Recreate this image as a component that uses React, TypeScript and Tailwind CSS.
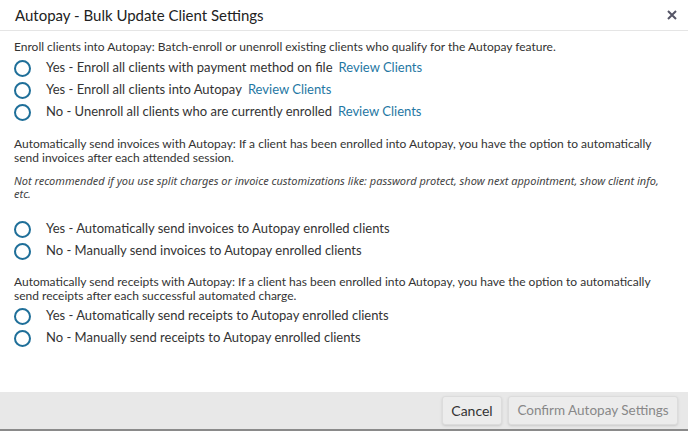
import { useState } from 'react'

type Option = { id: string; label: string; review?: boolean }

const ENROLL_OPTIONS: Option[] = [
  { id: 'enroll-pm', label: 'Yes - Enroll all clients with payment method on file', review: true },
  { id: 'enroll-all', label: 'Yes - Enroll all clients into Autopay', review: true },
  { id: 'unenroll', label: 'No - Unenroll all clients who are currently enrolled', review: true }
]

const INVOICE_OPTIONS: Option[] = [
  { id: 'inv-yes', label: 'Yes - Automatically send invoices to Autopay enrolled clients' },
  { id: 'inv-no', label: 'No - Manually send invoices to Autopay enrolled clients' }
]

const RECEIPT_OPTIONS: Option[] = [
  { id: 'rec-yes', label: 'Yes - Automatically send receipts to Autopay enrolled clients' },
  { id: 'rec-no', label: 'No - Manually send receipts to Autopay enrolled clients' }
]

function RadioGroup({ options, value, onChange }: { options: Option[]; value: string; onChange: (v: string) => void }) {
  return (
    <div className="flex flex-col">
      {options.map((opt) => (
        <label key={opt.id} className="flex items-center h-[22px] cursor-pointer">
          <span className="w-[17px] h-[17px] rounded-full border-2 border-[#1f6f99] ml-[14px] mr-[15px] flex items-center justify-center shrink-0">
            {value === opt.id && <span className="w-[7px] h-[7px] rounded-full bg-[#1f6f99]" />}
          </span>
          <input type="radio" className="hidden" checked={value === opt.id} onChange={() => onChange(opt.id)} />
          <span className="text-[13px] text-[#333]">{opt.label}</span>
          {opt.review && <a className="text-[13px] text-[#1f77a3] ml-[6px]">Review Clients</a>}
        </label>
      ))}
    </div>
  )
}

export default function App() {
  const [enroll, setEnroll] = useState('')
  const [invoice, setInvoice] = useState('')
  const [receipt, setReceipt] = useState('')

  return (
    <div className="w-[688px] h-[431px] bg-white flex flex-col font-['Lato',sans-serif] text-[#333] overflow-hidden">
      <div className="h-[31px] border-b border-[#e5e5e5] flex items-center justify-between pl-[15px] pr-[6px] shrink-0">
        <h1 className="text-[15px] text-[#222]">Autopay - Bulk Update Client Settings</h1>
        <button className="text-[#555] w-[20px] h-[20px] flex items-center justify-center">
          <svg width="10" height="10" viewBox="0 0 10 10">
            <path d="M1 1L9 9M9 1L1 9" stroke="#556" strokeWidth="2" />
          </svg>
        </button>
      </div>

      <div className="flex-1 pt-[8px]">
        <p className="text-[12px] px-[14px] leading-[16px]">
          Enroll clients into Autopay: Batch-enroll or unenroll existing clients who qualify for the Autopay feature.
        </p>
        <div className="mt-[2px]">
          <RadioGroup options={ENROLL_OPTIONS} value={enroll} onChange={setEnroll} />
        </div>

        <p className="text-[12px] px-[14px] leading-[14px] mt-[14px]">
          Automatically send invoices with Autopay: If a client has been enrolled into Autopay, you have the option to automatically send invoices after each attended session.
        </p>
        <p className="text-[11px] italic px-[14px] leading-[13px] mt-[9px] text-[#444] font-['Noto_Sans',sans-serif]">
          Not recommended if you use split charges or invoice customizations like: password protect, show next appointment, show client info, etc.
        </p>
        <div className="mt-[18px]">
          <RadioGroup options={INVOICE_OPTIONS} value={invoice} onChange={setInvoice} />
        </div>

        <p className="text-[12px] px-[14px] leading-[14px] mt-[13px]">
          Automatically send receipts with Autopay: If a client has been enrolled into Autopay, you have the option to automatically send receipts after each successful automated charge.
        </p>
        <div className="mt-[2px]">
          <RadioGroup options={RECEIPT_OPTIONS} value={receipt} onChange={setReceipt} />
        </div>
      </div>

      <div className="h-[39px] bg-[#e8e8e8] border-b-2 border-[#8a8a8a] flex items-center justify-end gap-[6px] pr-[10px] shrink-0">
        <button className="h-[29px] w-[60px] bg-[#ececec] border border-[#dcdcdc] rounded-[3px] shadow-sm text-[14px] text-[#333]">
          Cancel
        </button>
        <button className="h-[29px] w-[170px] bg-[#ececec] border border-[#dcdcdc] rounded-[3px] shadow-sm text-[13.5px] text-[#888]">
          Confirm Autopay Settings
        </button>
      </div>
    </div>
  )
}
